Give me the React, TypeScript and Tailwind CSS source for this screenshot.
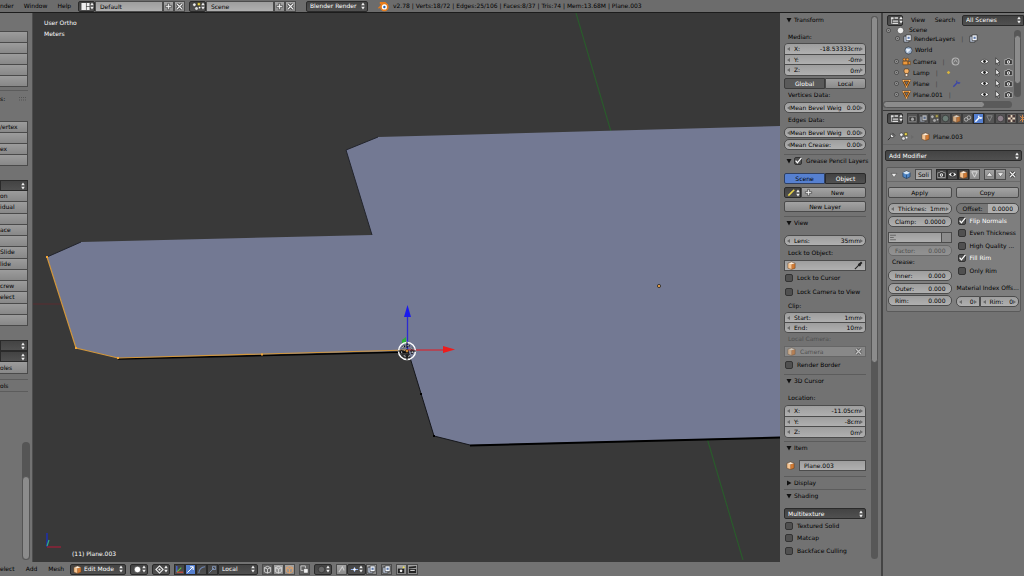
import type { ReactNode } from "react"
import clsx from "clsx"

const LIGHT = "border border-[#4a4a4a] bg-linear-to-b from-[#a3a3a3] to-[#8b8b8b] text-black"
const DARK = "border border-[#2a2a2a] bg-linear-to-b from-[#434343] to-[#505050] text-white"
const NUMBER = "border border-[#4c4c4c] bg-linear-to-b from-[#9e9e9e] to-[#b0b0b0] text-black"

/* ---------- icons, all on a 10x10 grid ---------- */

const Icon = ({ children, className }: { children: ReactNode; className?: string }) => (
  <svg viewBox="0 0 10 10" className={clsx("shrink-0", className ?? "size-[9px]")} fill="none">
    {children}
  </svg>
)

const UpDown = () => (
  <svg viewBox="0 0 4 8" className="pointer-events-none h-2 w-1 shrink-0">
    <path d="M2 0.6 L3.8 3.2 H0.2Z M2 7.4 L3.8 4.8 H0.2Z" fill="#eee" />
  </svg>
)

const Cube = () => (
  <Icon>
    <path d="M1 2.5 L5 3.6 V9.4 L1 8Z" fill="#f4c594" />
    <path d="M5 3.6 L9 2.5 V8 L5 9.4Z" fill="#d07a34" />
    <path d="M1 2.5 L5 1 L9 2.5 L5 3.6Z" fill="#fff0dc" />
    <path d="M1 2.5 L5 1 L9 2.5 V8 L5 9.4 L1 8Z" stroke="#5b3412" strokeWidth="0.5" />
  </Icon>
)

const Plus = () => (
  <Icon>
    <path d="M4 1.5H6V4H8.5V6H6V8.5H4V6H1.5V4H4Z" fill="#eee" stroke="#333" strokeWidth="0.7" />
  </Icon>
)

const Cross = () => (
  <Icon>
    <path d="M2 2L8 8M8 2L2 8" stroke="#333" strokeWidth="3" />
    <path d="M2 2L8 8M8 2L2 8" stroke="#eee" strokeWidth="1.4" />
  </Icon>
)

const SceneIcon = () => (
  <Icon>
    <circle cx="2.6" cy="3" r="1.9" fill="#eee" stroke="#222" strokeWidth="0.5" />
    <path d="M6 0.8H9.2V4H6Z" fill="#e8d34a" stroke="#222" strokeWidth="0.5" />
    <circle cx="5" cy="7.2" r="2" fill="#ddd" stroke="#222" strokeWidth="0.5" />
    <circle cx="8.4" cy="6.2" r="1" fill="#fff" />
  </Icon>
)

const LayoutIcon = () => (
  <Icon>
    <path d="M0.5 1H5.5V9H0.5Z M6.3 1H9.5V4.4H6.3Z M6.3 5.4H9.5V9H6.3Z" fill="#eee" />
  </Icon>
)

const EditorIcon = () => (
  <Icon>
    <path d="M1 1.5H4V3.5H1Z M5 1.5H9V3H5Z M3 5H9V6.4H3Z M3 7.6H9V9H3Z" fill="#ddd" />
    <path d="M1.7 3.5V8.3H3" stroke="#ddd" strokeWidth="0.8" />
  </Icon>
)

const Eye = () => (
  <Icon>
    <path d="M0.6 5C2.5 1.8 7.5 1.8 9.4 5C7.5 8.2 2.5 8.2 0.6 5Z" fill="#f2f2f2" stroke="#222" strokeWidth="0.7" />
    <circle cx="5" cy="5" r="1.6" fill="#222" />
  </Icon>
)

const Pointer = () => (
  <Icon>
    <path d="M3 1L7.8 5.6L5.8 5.9L7 8.6L5.8 9.1L4.6 6.5L3 7.9Z" fill="#eee" stroke="#222" strokeWidth="0.7" />
  </Icon>
)

const Photo = () => (
  <Icon>
    <path d="M0.8 3H3L3.8 1.6H6.4L7.2 3H9.2V8.4H0.8Z" fill="#333" stroke="#ddd" strokeWidth="0.6" />
    <circle cx="5" cy="5.6" r="1.9" fill="#eee" />
    <circle cx="5" cy="5.6" r="0.8" fill="#333" />
  </Icon>
)

const Wrench = ({ color = "#fff" }: { color?: string }) => (
  <Icon>
    <path d="M1.5 8.5L6 4" stroke={color} strokeWidth="1.6" />
    <path d="M5 2.4L6.6 4L8.8 4.4M5.4 1.6L5 3.2L6.8 5L9.2 4.2" stroke={color} strokeWidth="1" />
  </Icon>
)

const Mesh = () => (
  <Icon>
    <path d="M1.4 1.8H8.6L5 8.8Z" stroke="#4c2a0c" strokeWidth="2.2" />
    <path d="M1.4 1.8H8.6L5 8.8Z" stroke="#ef9a3c" strokeWidth="1.1" />
    <path d="M0.6 1H2.2V2.6H0.6Z M7.8 1H9.4V2.6H7.8Z M4.2 8H5.8V9.6H4.2Z" fill="#f8c07c" />
  </Icon>
)

const Globe = () => (
  <Icon>
    <circle cx="5" cy="5" r="4" fill="#9fb3cc" stroke="#2b3440" strokeWidth="0.7" />
    <path d="M2 3.5C4 2 5 4.5 7 3C7.5 5.5 5 5 4.4 7.4C3 7 3 5 2 3.5Z" fill="#e6eef8" />
  </Icon>
)

const SolidifyIcon = () => (
  <Icon>
    <path d="M1 3L5 1L9 3V7.500L5 9.500L1 7.500Z" fill="#4f86c6" stroke="#1d3a5c" strokeWidth="0.700" />
    <path d="M1 3L5 1L9 3L5 5Z" fill="#d6e6f6" />
    <path d="M5 5V9.500" stroke="#1d3a5c" strokeWidth="0.700" />
  </Icon>
)

const CameraIcon = () => (
  <Icon>
    <path d="M1 4.6H6.6V8.6H1Z M6.6 5.8L9.2 4.6V8.6L6.6 7.4Z" fill="#ef9a3c" stroke="#4c2a0c" strokeWidth="0.5" />
    <circle cx="2.6" cy="2.8" r="1.5" fill="#ef9a3c" stroke="#4c2a0c" strokeWidth="0.5" />
    <circle cx="6" cy="2.8" r="1.5" fill="#ef9a3c" stroke="#4c2a0c" strokeWidth="0.5" />
  </Icon>
)

const LampIcon = () => (
  <Icon>
    <path d="M3 1H7C8.4 3 7.6 4.6 6.6 6H3.4C2.4 4.6 1.6 3 3 1Z" fill="#f7b267" stroke="#4c2a0c" strokeWidth="0.6" />
    <path d="M3.6 6.4H6.4V9.2H3.6Z" fill="#fff" stroke="#4c2a0c" strokeWidth="0.6" />
  </Icon>
)

const Layers = () => (
  <Icon>
    <path d="M1 2.4H6.6V9H1Z" fill="#c6d2e6" stroke="#222" strokeWidth="0.7" />
    <path d="M3.4 1H9V7.4H3.4Z" fill="#f4f7fc" stroke="#222" strokeWidth="0.7" />
    <path d="M5 3H7.4V5.4H5Z" fill="#5a76a8" />
  </Icon>
)

const Dropper = () => (
  <Icon>
    <path d="M1 9L5.6 4.4" stroke="#222" strokeWidth="1.2" />
    <path d="M5 3L7.2 5.2M6.4 3.6L8.6 1.4" stroke="#222" strokeWidth="2.2" />
  </Icon>
)

const Ball = ({ color = "#eee" }: { color?: string }) => (
  <Icon>
    <circle cx="5" cy="5" r="3.6" fill={color} stroke="#222" strokeWidth="0.6" />
  </Icon>
)

const Expand = () => (
  <Icon className="size-[7px]">
    <circle cx="5" cy="5" r="2.8" fill="#c4c4c4" stroke="#333" strokeWidth="1.2" />
    <path d="M3.4 5H6.600M5 3.400V6.600" stroke="#333" strokeWidth="0.8" />
  </Icon>
)

/* ---------- widgets ---------- */

const Arrow = ({ flip }: { flip?: boolean }) => (
  <svg viewBox="0 0 3 4" className="h-1 w-[3px] shrink-0">
    <path d={flip ? "M0 0L3 2L0 4Z" : "M3 0L0 2L3 4Z"} fill="#6a6a6a" />
  </svg>
)

type FieldProps = { label: string; value: string; className?: string; arrows?: boolean }

const Field = ({ label, value, className, arrows = true }: FieldProps) => (
  <label className={clsx("flex h-[11px] min-w-0 items-center px-0.5", NUMBER, className)}>
    {arrows && <Arrow />}
    <span className={clsx("shrink-0 whitespace-nowrap", label.length < 12 && "pl-1")}>{label}</span>
    <input className="w-0 min-w-0 flex-1 bg-transparent text-right outline-none" defaultValue={value} />
    {arrows ? <Arrow flip /> : <span className="w-[3px]" />}
  </label>
)

const Stack = ({ items, className }: { items: [string, string][]; className?: string }) => (
  <div className={clsx("flex flex-col overflow-hidden rounded-[4px] border border-[#4c4c4c]", className)}>
    {items.map(([label, value]) => (
      <Field key={label} label={label} value={value} className="h-auto flex-1 border-0 border-b last:border-b-0" />
    ))}
  </div>
)

const Check = ({ label, checked, className }: { label: string; checked?: boolean; className?: string }) => (
  <label className={clsx("flex h-3 items-center gap-1 whitespace-nowrap", className)}>
    <span className="relative flex size-2 shrink-0">
      <input
        type="checkbox"
        defaultChecked={checked}
        className="peer size-2 appearance-none rounded-[2px] border border-[#333] bg-[#505050]"
      />
      <svg viewBox="0 0 8 8" className="pointer-events-none absolute inset-0 hidden size-2 peer-checked:block" fill="none">
        <path d="M1.6 3.6L3.4 5.8L7.4 0.8" stroke="#fff" strokeWidth="1.3" />
      </svg>
    </span>
    {label}
  </label>
)

type PickProps = { value: string; label: string; icon?: ReactNode; className?: string }

const Pick = ({ value, label, icon, className }: PickProps) => (
  <div className={clsx("flex h-[11px] items-center gap-px rounded-[2px] px-0.5", DARK, className)}>
    {icon}
    <select aria-label={label} defaultValue={value} className="min-w-0 flex-1 appearance-none bg-transparent pl-px outline-none">
      <option>{value}</option>
    </select>
    <UpDown />
  </div>
)

const IconPick = ({ label, children, className }: { label: string; children: ReactNode; className?: string }) => (
  <button aria-label={label} className={clsx("flex h-[11px] shrink-0 items-center justify-between rounded-[2px] px-0.5", DARK, className)}>
    {children}
    <UpDown />
  </button>
)

const Btn = ({ children, className }: { children?: ReactNode; className?: string }) => (
  <button className={clsx("flex h-[11px] items-center justify-center rounded-[2px]", className ?? LIGHT)}>
    {children}
  </button>
)

const Tiny = ({ label, children, className }: { label: string; children: ReactNode; className?: string }) => (
  <button aria-label={label} className={clsx("flex h-[11px] w-[11px] shrink-0 items-center justify-center", className)}>
    {children}
  </button>
)

const Label = ({ children, className }: { children: ReactNode; className?: string }) => (
  <div className={clsx("flex h-3 items-center whitespace-nowrap pl-1", className)}>{children}</div>
)

type SectionProps = { title: string; closed?: boolean; check?: boolean; className?: string; children?: ReactNode }

const Section = ({ title, closed, check, className, children }: SectionProps) => (
  <section className={clsx("flex shrink-0 flex-col", className)}>
    <h2 className="flex h-3 shrink-0 items-center gap-0.5 whitespace-nowrap pl-0.5">
      <svg viewBox="0 0 6 6" className="size-1.5 shrink-0">
        <path d={closed ? "M1 0.5L5.5 3L1 5.5Z" : "M0.5 1H5.5L3 5.5Z"} fill="#111" />
      </svg>
      {check ? <Check label={title} checked /> : title}
    </h2>
    {children}
  </section>
)

/* ---------- top bar ---------- */

const TopBar = () => (
  <header className="flex h-[13px] shrink-0 items-center overflow-hidden whitespace-nowrap border-b border-[#1c1c1c] bg-[#6c6c6c]">
    <nav className="flex w-[78px] shrink-0 gap-[10px]">
      <button>nder</button>
      <button>Window</button>
      <button>Help</button>
    </nav>
    <IconPick label="Screen layout" className="w-[17px]"><LayoutIcon /></IconPick>
    <input aria-label="Screen" defaultValue="Default" className={clsx("h-[11px] w-[68px] px-1", NUMBER)} />
    <Tiny label="Add screen" className={LIGHT}><Plus /></Tiny>
    <Tiny label="Delete screen" className={LIGHT}><Cross /></Tiny>
    <IconPick label="Scene browser" className="ml-1 w-[17px]"><SceneIcon /></IconPick>
    <input aria-label="Scene" defaultValue="Scene" className={clsx("h-[11px] w-[68px] px-1", NUMBER)} />
    <Tiny label="Add scene" className={LIGHT}><Plus /></Tiny>
    <Tiny label="Delete scene" className={LIGHT}><Cross /></Tiny>
    <Pick label="Render engine" value="Blender Render" className="ml-[10px] w-[62px] shrink-0" />
    <Icon className="ml-[10px] size-[11px]">
      <path d="M0.4 6.6L5 2.4H2.2V1.4H6.4L9 4" stroke="#e87d1c" strokeWidth="1.1" />
      <circle cx="5.8" cy="5.4" r="3.1" fill="#fff" stroke="#e87d1c" strokeWidth="1.5" />
      <circle cx="5.8" cy="5.4" r="1.1" fill="#2b5fa8" />
    </Icon>
    <span className="ml-1">v2.78 | Verts:18/72 | Edges:25/106 | Faces:8/37 | Tris:74 | Mem:13.68M | Plane.003</span>
  </header>
)

/* ---------- tool shelf ---------- */

const ShelfGroup = ({ rows, className }: { rows: string[]; className: string }) => (
  <div className={clsx("flex w-7 shrink-0 flex-col", className)}>
    {rows.map((row, i) => (
      <button
        key={i}
        className="flex min-h-0 flex-1 items-center whitespace-nowrap border-b border-r border-[#4a4a4a] bg-linear-to-b from-[#9c9c9c] to-[#888]"
      >
        {row}
      </button>
    ))}
  </div>
)

const ShelfDrop = ({ label }: { label: string }) => (
  <button aria-label={label} className={clsx("flex h-[11px] w-7 shrink-0 items-center justify-end pr-0.5", DARK)}>
    <UpDown />
  </button>
)

const ToolShelf = () => (
  <aside className="relative flex w-[33px] shrink-0 flex-col overflow-hidden border-r border-[#4d4d4d] bg-[#727272]">
    <ShelfGroup rows={["", "", "", "", ""]} className="mt-[18px] h-14 border-t border-[#4a4a4a]" />
    <div className="mt-[3px] flex h-4 w-7 shrink-0 items-center justify-between border-t border-[#5c5c5c] pr-px">
      s:
      <svg viewBox="0 0 8 4" className="h-1 w-2">
        <path d="M0 0.5H8M0 3H8" stroke="#555" strokeDasharray="1 1" />
      </svg>
    </div>
    <ShelfGroup rows={["/ertex", "", "ex", ""]} className="mt-[15px] h-[45px] border-t border-[#4a4a4a]" />
    <div className="mt-[14px] flex shrink-0 flex-col">
      <ShelfDrop label="Extrude" />
      <ShelfGroup
        rows={["on", "idual", "", "ace", "", "Slide", "lide", "", "crew", "elect", "", ""]}
        className="h-[135px]"
      />
    </div>
    <div className="mt-[14px] flex shrink-0 flex-col">
      <ShelfDrop label="Unwrap" />
      <ShelfDrop label="Merge" />
      <ShelfGroup rows={["oles"]} className="h-3" />
    </div>
    <div className="mt-[5px] flex h-[13px] w-7 shrink-0 items-center border-y border-[#5c5c5c]">ols</div>
    <div className="absolute bottom-0.5 right-0.5 flex h-[118px] w-2 flex-col justify-end rounded-sm bg-[#555]">
      <div className="h-[84px] rounded-sm border border-[#555] bg-[#8c8c8c]" />
    </div>
  </aside>
)

/* ---------- 3D view ---------- */

const Viewport = () => (
  <main className="relative min-w-0 flex-1 overflow-hidden bg-[#393939] text-white">
    <svg viewBox="33 13 747 549" preserveAspectRatio="xMinYMin slice" className="absolute inset-0 size-full" fill="none">
      <path d="M576 13L612 135M707 438L743 560" stroke="#2a5a2c" strokeWidth="1.2" />
      <path d="M33 304H62" stroke="#5a2c30" strokeWidth="1" />
      <path
        d="M378 137L780 126V437L470 445L434 436L408 351L118 358L76 348L47 257L81 242L372 235L346 150Z"
        fill="#737993"
      />
      <path d="M372 235L346 150L378 137M47 257L81 242" stroke="#22242c" strokeWidth="1" />
      <path d="M408 351L434 436L470 445" stroke="#15161b" strokeWidth="1" />
      <path d="M470 445.500L780 437.500" stroke="#000" strokeWidth="2" />
      <path d="M118 359L408 352" stroke="#000" strokeWidth="1.500" />
      <path d="M47 257L76 348L118 358L408 350" stroke="#d1963c" strokeWidth="1.200" />
      <path d="M46 256H48V258H46Z M75 347H77V349H75Z M117 357H119V359H117Z M261 353.500H263V355.500H261Z" fill="#f3a738" />
      <path d="M420 393H422V395H420Z M433 435H435V437H433Z" fill="#000" />
      <circle cx="659" cy="286" r="1.600" fill="#f2a64a" stroke="#222" strokeWidth="0.800" />

      {/* manipulator with the 3D cursor under it */}
      <path d="M402 340L406 337V344L402 343Z" fill="#2fae3a" />
      <path d="M407.500 349V316" stroke="#2b2bd0" strokeWidth="1.300" />
      <path d="M407.500 305L411 317H404Z" fill="#1a1aee" />
      <path d="M408 350H444" stroke="#c23845" strokeWidth="1.300" />
      <path d="M455 349.500L443 346V353Z" fill="#ee1c1c" />
      <circle cx="407" cy="351" r="8.500" stroke="#fff" strokeWidth="1.400" />
      <circle cx="407" cy="351" r="5.500" stroke="#111" strokeWidth="1.600" strokeDasharray="3 2" />
      <circle cx="407" cy="351" r="5.500" stroke="#fff" strokeWidth="1" strokeDasharray="2 3" />
      <path d="M398 351H404M410 351H416M407 342V348M407 354V360" stroke="#111" strokeWidth="1" />
      <circle cx="407" cy="351" r="1.500" fill="#f0a040" stroke="#111" strokeWidth="0.600" />

      {/* axis gizmo */}
      <path d="M47 547V533" stroke="#1b2fb8" strokeWidth="1.400" />
      <path d="M47 546L49 540" stroke="#2fae8a" strokeWidth="1.200" />
      <path d="M47 547H61" stroke="#9c1f38" strokeWidth="1.300" />
    </svg>
    <div className="absolute left-[11px] top-1 leading-[11px]">
      <p>User Ortho</p>
      <p>Meters</p>
    </div>
    <p className="absolute bottom-[5px] left-[39px]">(11) Plane.003</p>
  </main>
)

/* ---------- N panel ---------- */

const LINE = "border-t border-[#5c5c5c]"

const SidePanel = () => (
  <aside className="flex w-[101px] shrink-0 overflow-hidden bg-[#727272] pl-1">
    <div className="flex w-[82px] shrink-0 flex-col">
      <Section title="Transform" className="pt-px">
        <Label className="mt-[5px]">Median:</Label>
        <Stack items={[["X:", "-18.53333cm"], ["Y:", "-0m"], ["Z:", "0m"]]} className="h-[33px]" />
        <div className="mt-0.5 flex">
          <Btn className="flex-1 rounded-r-none border border-[#3c3c3c] bg-[#5a5a5a] text-white">Global</Btn>
          <Btn className={clsx("flex-1 rounded-l-none", LIGHT)}>Local</Btn>
        </div>
        <Label>Vertices Data:</Label>
        <Field label="Mean Bevel Weig" value="0.00" className="mt-px rounded-[5px]" />
        <Label className="mt-px">Edges Data:</Label>
        <Field label="Mean Bevel Weig" value="0.00" className="mt-px rounded-[5px]" />
        <Field label="Mean Crease:" value="0.00" className="mt-px rounded-[5px]" />
      </Section>

      <Section title="Grease Pencil Layers" check className={clsx("mt-1", LINE)}>
        <div className="mt-[6px] flex">
          <Btn className="flex-1 rounded-r-none border border-[#2f3f60] bg-[#5680d0]">Scene</Btn>
          <Btn className={clsx("flex-1 rounded-l-none", DARK)}>Object</Btn>
        </div>
        <div className="mt-[3px] flex">
          <IconPick label="Grease pencil data" className="w-[17px] rounded-r-none">
            <Icon><path d="M1.500 8.500L8 2" stroke="#e8d34a" strokeWidth="1.800" /></Icon>
          </IconPick>
          <button className={clsx("flex h-[11px] flex-1 items-center gap-[18px] rounded-r-[2px] px-0.5", LIGHT)}>
            <Plus />
            New
          </button>
        </div>
        <Btn className={clsx("mt-[3px]", LIGHT)}>New Layer</Btn>
      </Section>

      <Section title="View" className={clsx("mt-1", LINE)}>
        <Field label="Lens:" value="35mm" className="mt-[6px] rounded-[5px]" />
        <Label className="mt-px">Lock to Object:</Label>
        <div className={clsx("mt-px flex h-[11px] items-center px-0.5", NUMBER)}>
          <Cube />
          <input aria-label="Lock to Object" className="w-0 flex-1 outline-none" />
          <Dropper />
        </div>
        <Check label="Lock to Cursor" className="mt-px pl-px" />
        <Check label="Lock Camera to View" className="mt-0.5 pl-px" />
        <Label className="mt-0.5">Clip:</Label>
        <Stack items={[["Start:", "1mm"], ["End:", "10m"]]} className="h-[21px]" />
        <Label className="text-[#4f4f4f]">Local Camera:</Label>
        <div className="mt-px flex h-[11px] items-center gap-1 border border-[#666] bg-[#888] px-0.5 text-[#4f4f4f]">
          <span className="opacity-60"><Cube /></span>
          <input aria-label="Local Camera" disabled defaultValue="Camera" className="w-0 flex-1 outline-none" />
          <span className="opacity-60"><Cross /></span>
        </div>
        <Check label="Render Border" className="mt-0.5 pl-px" />
      </Section>

      <Section title="3D Cursor" className={clsx("mt-[3px]", LINE)}>
        <Label className="mt-[5px]">Location:</Label>
        <Stack items={[["X:", "-11.05cm"], ["Y:", "-8cm"], ["Z:", "0m"]]} className="mt-px h-[33px]" />
      </Section>

      <Section title="Item" className={clsx("mt-[3px]", LINE)}>
        <div className="mt-[6px] flex h-[11px] items-center gap-1 pl-0.5">
          <Cube />
          <input aria-label="Object name" defaultValue="Plane.003" className={clsx("h-[11px] w-0 flex-1 px-1 outline-none", NUMBER)} />
        </div>
      </Section>

      <Section title="Display" closed className={clsx("mt-[5px]", LINE)} />

      <Section title="Shading" className={clsx("h-[72px] overflow-hidden", LINE)}>
        <Pick label="Shading mode" value="Multitexture" className="mt-[6px] shrink-0" />
        <Check label="Textured Solid" className="mt-px shrink-0 pl-px" />
        <Check label="Matcap" className="shrink-0 pl-px" />
        <Check label="Backface Culling" className="mt-px shrink-0 pl-px" />
        <div className="mx-px mt-1 h-2 w-2 shrink-0 rounded-[2px] border border-[#333] bg-[#505050]" />
      </Section>
    </div>
    <div className="my-[3px] ml-[5px] w-[7px] rounded-sm bg-[#575757]">
      <div className="h-[347px] rounded-sm border border-[#555] bg-[#8c8c8c]" />
    </div>
  </aside>
)

/* ---------- 3D view header ---------- */

const ViewHeader = () => (
  <footer className="flex h-[14px] shrink-0 items-center overflow-hidden whitespace-nowrap bg-[#727272]">
    <nav className="flex w-[70px] shrink-0 gap-[11px]">
      <button>elect</button>
      <button>Add</button>
      <button>Mesh</button>
    </nav>
    <Pick label="Mode" value="Edit Mode" icon={<Cube />} className="w-14 shrink-0" />
    <IconPick label="Viewport shading" className="ml-1 w-[18px]"><Ball color="#fff" /></IconPick>
    <IconPick label="Pivot point" className="ml-1 w-[18px]">
      <Icon><path d="M5 1L9 5L5 9L1 5Z" stroke="#eee" strokeWidth="1.200" /><circle cx="5" cy="5" r="1.200" fill="#eee" /></Icon>
    </IconPick>
    <div className="ml-1 flex">
      <Tiny label="Manipulator" className={DARK}>
        <Icon><path d="M2 1V8" stroke="#4a6cf0" strokeWidth="1.200" /><path d="M2 8L7 3" stroke="#5fc04a" strokeWidth="1.200" /><path d="M2 8H9" stroke="#e0483a" strokeWidth="1.200" /></Icon>
      </Tiny>
      <Tiny label="Translate" className="border border-[#2a2a2a] bg-[#5680d0]">
        <Icon><path d="M1.500 8.500L8 2M4.500 2H8V5.500" stroke="#fff" strokeWidth="1.100" /></Icon>
      </Tiny>
      <Tiny label="Rotate" className={DARK}>
        <Icon><path d="M2 9C2 5 5 2 9 2" stroke="#6f86b4" strokeWidth="1.200" /></Icon>
      </Tiny>
      <Tiny label="Scale" className={DARK}>
        <Icon><path d="M1.500 8.500L7 3M5 1.500H8.500V5H5Z" stroke="#8295b8" strokeWidth="1" /></Icon>
      </Tiny>
      <Pick label="Orientation" value="Local" className="w-10 rounded-l-none" />
    </div>
    <div className="ml-1 flex">
      {["Vertex select", "Edge select", "Face select"].map((name, i) => (
        <Tiny key={name} label={name} className={i === 0 ? "border border-[#4a4a4a] bg-[#626262]" : LIGHT}>
          <Icon>
            <path d="M1.500 3L5 1.500L8.500 3V7.500L5 9L1.500 7.500Z M1.500 3L5 4.500L8.500 3M5 4.500V9" stroke={i === 2 ? "#e3a064" : "#d6d6d6"} strokeWidth="1" />
          </Icon>
        </Tiny>
      ))}
    </div>
    <Tiny label="Limit selection to visible" className="ml-1 border border-[#4a4a4a] bg-[#626262]">
      <Icon><path d="M1 1H6V6H1Z" stroke="#ccc" /><path d="M4 4H9V9H4Z" fill="#eee" stroke="#222" strokeWidth="0.500" /></Icon>
    </Tiny>
    <IconPick label="Proportional editing" className="ml-1 w-[18px]"><Ball color="#666" /></IconPick>
    <div className="ml-1 flex">
      <Tiny label="Snap" className={LIGHT}>
        <Icon><path d="M2 8L6 2L8 6" stroke="#ccc" strokeWidth="1.200" /></Icon>
      </Tiny>
      <IconPick label="Snap element" className="w-[19px]">
        <Icon><path d="M1 5H9M5 2.500V7.500" stroke="#8fb0f0" strokeWidth="1.200" /><circle cx="5" cy="5" r="1.400" fill="#fff" /></Icon>
      </IconPick>
      <Tiny label="Snap target" className={LIGHT}><Layers /></Tiny>
    </div>
    <Tiny label="Render layer" className="ml-1 border border-[#4a4a4a] bg-[#808080]"><Layers /></Tiny>
    <div className="ml-1 flex">
      <Tiny label="OpenGL render" className={LIGHT}>
        <Icon><path d="M1 4H8V9H1Z" fill="#222" /><circle cx="4.500" cy="6.500" r="1.500" fill="#eee" /><path d="M7 1L9 3L6 4Z" fill="#f0e04a" /></Icon>
      </Tiny>
      <Tiny label="OpenGL animation" className={LIGHT}>
        <Icon><path d="M1 2L9 1V3L1 4Z M1 4.500H9V9H1Z" fill="#222" /><path d="M2.500 6H7.500" stroke="#eee" /></Icon>
      </Tiny>
    </div>
  </footer>
)

/* ---------- outliner ---------- */

const TREE = [
  { name: "Camera", icon: <CameraIcon />, data: <Icon><circle cx="5" cy="5" r="3.800" stroke="#b4b4b4" strokeWidth="1.200" /><path d="M3 6L5 3L7 6" stroke="#b4b4b4" /></Icon> },
  { name: "Lamp", icon: <LampIcon />, data: <Icon><path d="M5 3L7 5L5 7L3 5Z" fill="#d8b43c" /></Icon> },
  { name: "Plane", icon: <Mesh />, data: <span className="pl-2"><Wrench color="#3b45a8" /></span> },
  { name: "Plane.001", icon: <Mesh />, data: null },
]

const Outliner = () => (
  <section className="flex h-[98px] shrink-0 flex-col border-b border-[#3a3a3a]">
    <div className="flex h-[14px] shrink-0 items-center pl-1">
      <IconPick label="Outliner editor" className="w-4"><EditorIcon /></IconPick>
      <button className="ml-1 w-[22px]">View</button>
      <button className="ml-1 w-6">Search</button>
      <Pick label="Display mode" value="All Scenes" className="ml-[5px] flex-1 rounded-r-none" />
    </div>
    <div className="flex h-[74px] shrink-0 overflow-hidden">
      <ul className="min-w-0 flex-1">
        <li className="flex h-[6px] items-center gap-1 pl-0.5"><Expand /><Ball />Scene</li>
        <li className="flex h-[11px] items-center gap-0.5 pl-[11px]">
          <Expand /><Layers />RenderLayers<span className="px-1 text-[#444]">|</span><Layers />
        </li>
        <li className="flex h-3 items-center gap-0.5 pl-[21px]"><Globe />World</li>
        {TREE.map((row) => (
          <li key={row.name} className="flex h-[11px] items-center gap-0.5 pl-[10px]">
            <Expand />
            {row.icon}
            {row.name}
            <span className="px-1 text-[#444]">|</span>
            {row.data}
            <span className="ml-auto flex gap-0.5">
              <button aria-label="Visible" className="pr-0.5"><Eye /></button>
              <button aria-label="Selectable"><Pointer /></button>
              <button aria-label="Renderable"><Photo /></button>
            </span>
          </li>
        ))}
      </ul>
      <div className="ml-px mr-[3px] mt-[3px] h-[67px] w-[7px] shrink-0 rounded-sm bg-[#575757] pt-[5px]">
        <div className="h-[49px] rounded-sm border border-[#555] bg-[#8c8c8c]" />
      </div>
    </div>
    <div className="mr-3 h-[7px] shrink-0 rounded-sm bg-[#5a5a5a]">
      <div className="h-[7px] w-[102px] rounded-sm border border-[#555] bg-[#8c8c8c]" />
    </div>
  </section>
)

/* ---------- properties editor ---------- */

const TABS: { name: string; icon: ReactNode }[] = [
  { name: "Render", icon: <Icon><path d="M1 3H9V8.500H1Z" fill="#3c3c3c" stroke="#9a9a9a" strokeWidth="0.700" /><circle cx="5" cy="5.700" r="1.700" fill="#a8a8a8" /></Icon> },
  { name: "Render layers", icon: <span className="opacity-60"><Layers /></span> },
  { name: "Scene", icon: <span className="opacity-60"><SceneIcon /></span> },
  { name: "World", icon: <Ball color="#6c7c76" /> },
  { name: "Object", icon: <span className="opacity-80"><Cube /></span> },
  { name: "Constraints", icon: <Icon><circle cx="3.500" cy="6" r="2" stroke="#bbb" /><circle cx="6.500" cy="4" r="2" stroke="#bbb" /></Icon> },
  { name: "Modifiers", icon: <Wrench /> },
  { name: "Data", icon: <Icon><path d="M2 2H8L5 8Z" stroke="#8a8a8a" /></Icon> },
  { name: "Material", icon: <Ball color="#8b7f88" /> },
  { name: "Texture", icon: <Icon><path d="M1 1H9V9H1Z" fill="#e8d8c0" /><path d="M1 1H4V4H1Z M6 1H9V4H6Z M4 4H6V6H4Z M1 6H4V9H1Z M6 6H9V9H6Z" fill="#4a3a3a" /></Icon> },
  { name: "Particles", icon: <Icon><path d="M2 2L8 8M8 2L2 8M5 1V9" stroke="#d88a4a" /></Icon> },
]

const Modifier = () => (
  <div className="mx-[3px] mt-[6px] flex flex-col rounded-[2px] border border-[#5a5a5a] bg-[#7e7e7e]">
    <div className="flex h-[14px] items-center border-b border-[#6a6a6a] pl-[3px] pr-0.5">
      <button aria-label="Collapse" className="w-3"><Icon className="size-2"><path d="M1.500 3H8.500L5 8Z" fill="#eee" stroke="#333" strokeWidth="0.600" /></Icon></button>
      <SolidifyIcon />
      <input aria-label="Modifier name" defaultValue="Soli" className={clsx("ml-1 h-[11px] w-[17px] px-0.5", NUMBER)} />
      <div className="ml-1 flex">
        <Tiny label="Render" className={DARK}><Photo /></Tiny>
        <Tiny label="Realtime" className={DARK}><Eye /></Tiny>
        <Tiny label="Edit mode" className={DARK}><Cube /></Tiny>
        <Tiny label="Cage" className={LIGHT}><Icon><path d="M2 2H8L5 8Z" stroke="#ddd" /></Icon></Tiny>
      </div>
      <div className="ml-1 flex">
        <Tiny label="Move up" className={LIGHT}><Icon><path d="M1.500 7H8.500L5 2.500Z" fill="#eee" stroke="#444" strokeWidth="0.500" /></Icon></Tiny>
        <Tiny label="Move down" className={LIGHT}><Icon><path d="M1.500 3H8.500L5 7.500Z" fill="#eee" stroke="#444" strokeWidth="0.500" /></Icon></Tiny>
      </div>
      <Tiny label="Remove" className="ml-auto"><Cross /></Tiny>
    </div>
    <div className="grid grid-cols-2 gap-x-1 px-px pb-1 pt-[5px]">
      <div className="flex min-w-0 flex-col">
        <Btn>Apply</Btn>
        <Field label="Thicknes:" value="1mm" className="mt-[5px] rounded-[5px]" />
        <Field label="Clamp:" value="0.0000" arrows={false} className="mt-0.5 rounded-[5px]" />
        <div className={clsx("mt-[5px] flex h-[11px] items-center", NUMBER)}>
          <Icon><path d="M1.500 2.500H8M1.500 5H5M1.500 7.500H8" stroke="#444" strokeDasharray="1.500 0.700" /></Icon>
          <input aria-label="Vertex group" className="w-0 flex-1 outline-none" />
          <button aria-label="Invert" className="h-full w-[10px] border-l border-[#4c4c4c] bg-[#8b8b8b]" />
        </div>
        <Field label="Factor:" value="0.000" arrows={false} className="mt-0.5 rounded-[5px] opacity-40" />
        <Label>Crease:</Label>
        <Field label="Inner:" value="0.000" arrows={false} className="mt-0.5 rounded-[5px]" />
        <Field label="Outer:" value="0.000" arrows={false} className="mt-0.5 rounded-[5px]" />
        <Field label="Rim:" value="0.000" arrows={false} className="mt-px rounded-[5px]" />
      </div>
      <div className="flex min-w-0 flex-col">
        <Btn>Copy</Btn>
        <Field label="Offset:" value="0.0000" arrows={false} className="mt-[5px] rounded-[5px] bg-linear-to-r from-[#777] from-50% to-[#a5a5a5] to-50%" />
        <Check label="Flip Normals" checked className="mt-px pl-0.5 text-white" />
        <Check label="Even Thickness" className="pl-0.5" />
        <Check label="High Quality ..." className="mt-px pl-0.5" />
        <Check label="Fill Rim" checked className="pl-0.5 text-white" />
        <Check label="Only Rim" className="mt-px pl-0.5" />
        <div className="mt-[5px] h-3 whitespace-nowrap pl-px leading-3">Material Index Offs...</div>
        <div className="mt-0.5 flex">
          <Field label="" value="0" className="w-6 rounded-l-[5px]" />
          <Field label="Rim:" value="0" className="flex-1 rounded-r-[5px]" />
        </div>
      </div>
    </div>
  </div>
)

const Properties = () => (
  <section className="flex min-h-0 flex-1 flex-col overflow-hidden">
    <div className="flex h-[14px] shrink-0 items-center pl-1">
      <IconPick label="Properties editor" className="w-4"><EditorIcon /></IconPick>
      <div className="ml-1 flex">
        {TABS.map((tab) => (
          <Tiny
            key={tab.name}
            label={tab.name}
            className={tab.name === "Modifiers" ? "border border-[#2a2a2a] bg-[#5680d0]" : "border border-[#3c3c3c] bg-[#555]"}
          >
            {tab.icon}
          </Tiny>
        ))}
      </div>
    </div>
    <div className="mt-1 flex h-4 shrink-0 items-center gap-[3px] border-b border-[#666] pl-1">
      <Icon><path d="M1 9L4 6" stroke="#222" /><path d="M4.500 2L8 5.500L5.500 6.500L3.500 4.500Z M6 1L9 4" fill="#eee" stroke="#222" strokeWidth="0.700" /></Icon>
      <SceneIcon />
      <Arrow flip />
      <span className="pl-1"><Cube /></span>
      Plane.003
    </div>
    <Pick label="Add Modifier" value="Add Modifier" className="mx-0.5 mt-[5px] shrink-0" />
    <Modifier />
  </section>
)

export default function App() {
  return (
    <div className="flex h-screen w-full flex-col overflow-hidden bg-[#727272] font-['DejaVu_Sans',sans-serif] text-[6px] leading-none text-black">
      <TopBar />
      <div className="flex min-h-0 flex-1">
        <div className="flex min-w-0 flex-1 flex-col">
          <div className="flex min-h-0 flex-1">
            <ToolShelf />
            <Viewport />
            <SidePanel />
          </div>
          <ViewHeader />
        </div>
        <div className="flex w-[143px] shrink-0 flex-col border-l-2 border-[#444]">
          <Outliner />
          <Properties />
        </div>
      </div>
    </div>
  )
}
